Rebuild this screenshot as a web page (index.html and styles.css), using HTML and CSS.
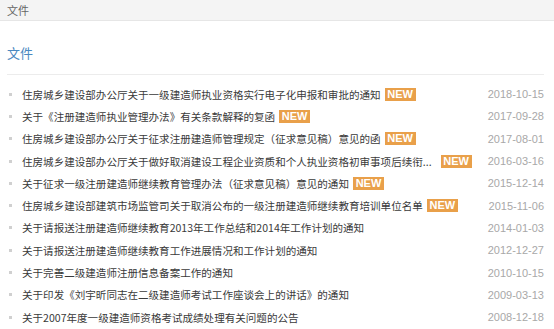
FILE: index.html
```html
<!DOCTYPE html>
<html lang="zh-CN">
<head>
<meta charset="utf-8">
<link rel="stylesheet" href="styles.css">
</head>
<body>
<div class="topbar">文件</div>
<div class="panel">
  <h2 class="heading">文件</h2>
  <ul class="list">
    <li class="row"><span class="title">住房城乡建设部办公厅关于一级建造师执业资格实行电子化申报和审批的通知</span><span class="badge">NEW</span><span class="date">2018-10-15</span></li>
    <li class="row"><span class="title">关于《注册建造师执业管理办法》有关条款解释的复函</span><span class="badge">NEW</span><span class="date">2017-09-28</span></li>
    <li class="row"><span class="title">住房城乡建设部办公厅关于征求注册建造师管理规定（征求意见稿）意见的函</span><span class="badge">NEW</span><span class="date">2017-08-01</span></li>
    <li class="row"><span class="title">住房城乡建设部办公厅关于做好取消建设工程企业资质和个人执业资格初审事项后续衔...</span><span class="badge badge-far">NEW</span><span class="date">2016-03-16</span></li>
    <li class="row"><span class="title">关于征求一级注册建造师继续教育管理办法（征求意见稿）意见的通知</span><span class="badge">NEW</span><span class="date">2015-12-14</span></li>
    <li class="row"><span class="title">住房城乡建设部建筑市场监管司关于取消公布的一级注册建造师继续教育培训单位名单</span><span class="badge">NEW</span><span class="date">2015-11-06</span></li>
    <li class="row"><span class="title">关于请报送注册建造师继续教育2013年工作总结和2014年工作计划的通知</span><span class="date">2014-01-03</span></li>
    <li class="row"><span class="title">关于请报送注册建造师继续教育工作进展情况和工作计划的通知</span><span class="date">2012-12-27</span></li>
    <li class="row"><span class="title">关于完善二级建造师注册信息备案工作的通知</span><span class="date">2010-10-15</span></li>
    <li class="row"><span class="title">关于印发《刘宇昕同志在二级建造师考试工作座谈会上的讲话》的通知</span><span class="date">2009-03-13</span></li>
    <li class="row"><span class="title">关于2007年度一级建造师资格考试成绩处理有关问题的公告</span><span class="date">2008-12-18</span></li>
  </ul>
</div>
</body>
</html>
```
FILE: styles.css
```css
* { box-sizing: border-box; }
html, body { margin: 0; padding: 0; background: #fff; }
body {
  font-family: "Noto Sans CJK SC", "Liberation Sans", sans-serif;
  color: #3a3a3a;
  width: 554px;
  overflow: hidden;
}
.topbar {
  height: 21px;
  line-height: 20px;
  padding-left: 7px;
  font-size: 11px;
  color: #666;
  background: #f4f4f4;
  border-bottom: 1px solid #e6e6e6;
}
.panel {
  padding: 0 10px 0 7px;
}
.heading {
  margin: 24px 0 0;
  padding-bottom: 13px;
  font-size: 13px;
  line-height: 16px;
  font-weight: normal;
  color: #4a88c0;
  border-bottom: 1px solid #ececec;
}
.list {
  list-style: none;
  margin: 0;
  padding: 8px 0 0;
}
.row {
  display: flex;
  align-items: center;
  height: 22.3px;
  font-size: 10.55px;
  white-space: nowrap;
}
.row::before {
  content: "";
  width: 3px;
  height: 3px;
  background: #d0d0d0;
  margin: 0 10px 0 2px;
  flex: none;
}
.title {
  overflow: hidden;
}
.badge {
  flex: none;
  margin-left: 4px;
  width: 31px;
  height: 13px;
  line-height: 13px;
  text-align: center;
  background: #e9a04a;
  color: #fff;
  font-family: "Liberation Sans", Arial, sans-serif;
  font-weight: bold;
  font-size: 11px;
}
.badge-far { margin-left: 9px; }
.date {
  margin-left: auto;
  flex: none;
  font-family: "Liberation Sans", Arial, sans-serif;
  font-size: 11px;
  color: #a8a8a8;
}
```
